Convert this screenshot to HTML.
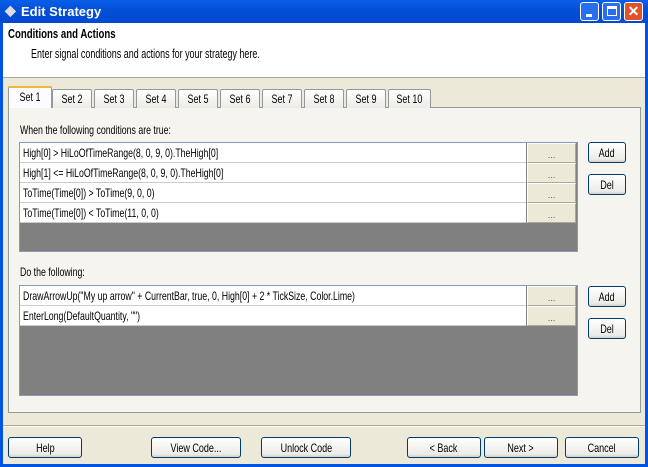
<!DOCTYPE html>
<html><head><style>
*{box-sizing:border-box;margin:0;padding:0}
body{width:648px;height:467px;overflow:hidden;font-family:"Liberation Sans",Tahoma,sans-serif;font-size:12px;color:#000;background:#0054e3;position:relative}
.abs{position:absolute}
.n{display:inline-block;transform:scaleX(.73);transform-origin:left center;white-space:nowrap}
.c{display:inline-block;transform:scaleX(.75);transform-origin:center center;white-space:nowrap}
.title{left:0;top:0;width:648px;height:23px;background:linear-gradient(#0a5fe8,#0350d8 40%,#0048d0);color:#fff;font-weight:bold;font-size:13px}
.win{left:3px;top:23px;width:642px;height:441px;background:#ece9d8}
.hdr{left:3px;top:23px;width:642px;height:55px;background:#fff;border-bottom:1px solid #aca899}
.tb{top:2px;width:19px;height:19px;border:1px solid #fff;border-radius:3px;background:#2a6ef0}
.tab{top:89px;height:19px;border:1px solid #919b9c;border-bottom:none;background:linear-gradient(#fff,#ecebe6);text-align:center;line-height:19px;border-radius:2px 2px 0 0}
.panel{left:8px;top:107px;width:633px;height:306px;background:#f5f4ee;border:1px solid #919b9c}
.grid{background:#808080;border:1px solid #7f9db9}
.row{position:absolute;left:0;height:20px;width:506px;background:#fff;border-bottom:1px solid #ccc;padding-left:3px;line-height:21px;white-space:nowrap}
.dots{position:absolute;left:507px;width:49px;height:20px;background:#ece9d8;border:1px solid #fff;border-right-color:#aca899;border-bottom-color:#aca899;text-align:center;font-size:9px;line-height:22px;color:#555}
.btn{height:21px;border:1px solid #003c74;border-radius:3px;background:linear-gradient(#fff,#ecebe6 85%,#d6d0c5);text-align:center;line-height:20px}
</style></head><body>
<div class="abs title"><span style="position:absolute;left:5px;top:2px;font-size:14px;color:#ddd">◆</span><span style="position:absolute;left:21px;top:4px">Edit Strategy</span></div>
<div class="abs tb" style="left:580px"><div style="position:absolute;left:5px;top:11px;width:6px;height:3px;background:#fff"></div></div>
<div class="abs tb" style="left:602px"><div style="position:absolute;left:4px;top:3px;width:10px;height:10px;border:1px solid #fff;border-top-width:3px"></div></div>
<div class="abs tb" style="left:624px;background:#e0532a;color:#fff;text-align:center;font-weight:bold;font-size:14px;line-height:17px">✕</div>
<div class="abs win"></div>
<div class="abs hdr"></div>
<div class="abs" style="left:8px;top:26px;font-weight:bold;font-size:13px"><span class="n" style="transform:scaleX(.74)">Conditions and Actions</span></div>
<div class="abs" style="left:31px;top:46px;font-size:13px"><span class="n" style="transform:scaleX(.69)">Enter signal conditions and actions for your strategy here.</span></div>
<div class="abs panel"></div>
<div class="abs tab" style="left:8px;top:86px;width:44px;height:22px;background:#fcfcfe;border-top:2px solid #f3b33d;z-index:2"><span class="c">Set 1</span></div>
<div class="abs tab" style="left:52px;width:40px"><span class="c">Set 2</span></div>
<div class="abs tab" style="left:94px;width:40px"><span class="c">Set 3</span></div>
<div class="abs tab" style="left:136px;width:40px"><span class="c">Set 4</span></div>
<div class="abs tab" style="left:178px;width:40px"><span class="c">Set 5</span></div>
<div class="abs tab" style="left:220px;width:40px"><span class="c">Set 6</span></div>
<div class="abs tab" style="left:262px;width:40px"><span class="c">Set 7</span></div>
<div class="abs tab" style="left:304px;width:40px"><span class="c">Set 8</span></div>
<div class="abs tab" style="left:346px;width:40px"><span class="c">Set 9</span></div>
<div class="abs tab" style="left:388px;width:43px"><span class="c">Set 10</span></div>
<div class="abs" style="left:20px;top:123px"><span class="n">When the following conditions are true:</span></div>
<div class="abs grid" style="left:19px;top:142px;width:559px;height:110px">
<div class="row" style="top:0"><span class="n">High[0] &gt; HiLoOfTimeRange(8, 0, 9, 0).TheHigh[0]</span></div><div class="dots" style="top:0">...</div>
<div class="row" style="top:20px"><span class="n">High[1] &lt;= HiLoOfTimeRange(8, 0, 9, 0).TheHigh[0]</span></div><div class="dots" style="top:20px">...</div>
<div class="row" style="top:40px"><span class="n">ToTime(Time[0]) &gt; ToTime(9, 0, 0)</span></div><div class="dots" style="top:40px">...</div>
<div class="row" style="top:60px"><span class="n">ToTime(Time[0]) &lt; ToTime(11, 0, 0)</span></div><div class="dots" style="top:60px">...</div>
</div>
<div class="abs btn" style="left:588px;top:142px;width:38px"><span class="c">Add</span></div>
<div class="abs btn" style="left:588px;top:174px;width:38px"><span class="c">Del</span></div>
<div class="abs" style="left:20px;top:265px"><span class="n">Do the following:</span></div>
<div class="abs grid" style="left:19px;top:285px;width:559px;height:111px">
<div class="row" style="top:0"><span class="n">DrawArrowUp("My up arrow" + CurrentBar, true, 0, High[0] + 2 * TickSize, Color.Lime)</span></div><div class="dots" style="top:0">...</div>
<div class="row" style="top:20px"><span class="n">EnterLong(DefaultQuantity, "")</span></div><div class="dots" style="top:20px">...</div>
</div>
<div class="abs btn" style="left:588px;top:286px;width:38px"><span class="c">Add</span></div>
<div class="abs btn" style="left:588px;top:318px;width:38px"><span class="c">Del</span></div>
<div class="abs" style="left:3px;top:425px;width:642px;height:2px;border-top:1px solid #aca899;border-bottom:1px solid #fff"></div>
<div class="abs btn" style="left:8px;top:437px;width:74px"><span class="c">Help</span></div>
<div class="abs btn" style="left:151px;top:437px;width:90px"><span class="c">View Code...</span></div>
<div class="abs btn" style="left:261px;top:437px;width:90px"><span class="c">Unlock Code</span></div>
<div class="abs btn" style="left:407px;top:437px;width:74px"><span class="c">&lt; Back</span></div>
<div class="abs btn" style="left:484px;top:437px;width:74px"><span class="c">Next &gt;</span></div>
<div class="abs btn" style="left:565px;top:437px;width:74px"><span class="c">Cancel</span></div>
</body></html>
